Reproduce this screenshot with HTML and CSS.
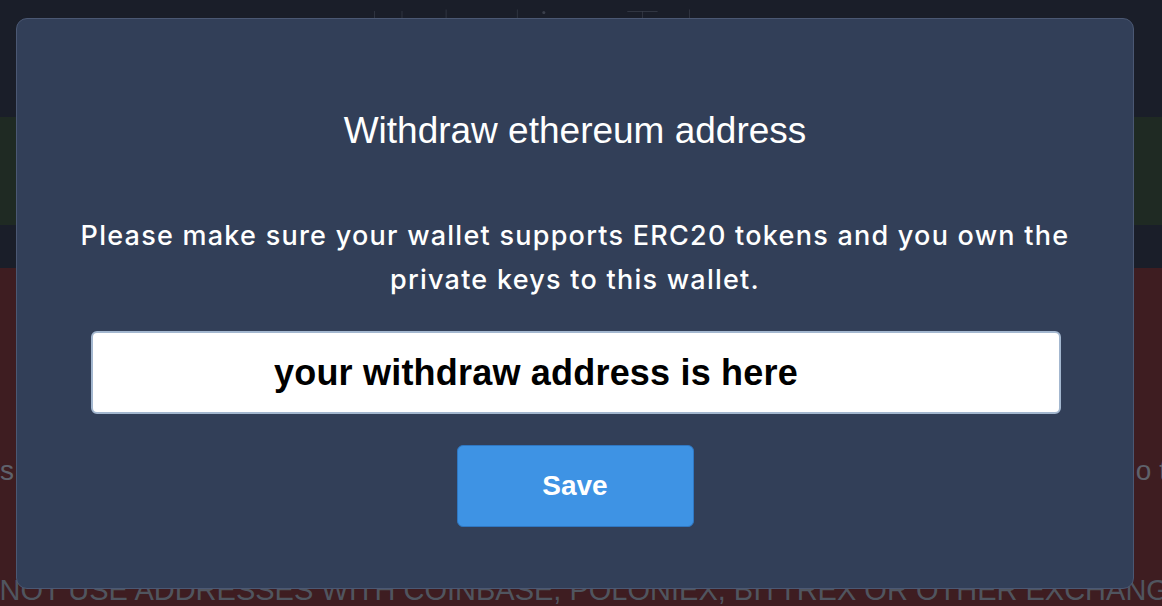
FILE: index.html
```html
<!DOCTYPE html>
<html lang="en">
<head>
<meta charset="utf-8">
<title>Withdraw ethereum address</title>
<link rel="stylesheet" href="styles.css">
</head>
<body>
<div class="page">
  <header class="hero">
    <h1 class="hero-title">Unlocking Tokens</h1>
  </header>
  <section class="band band-green"></section>
  <section class="band band-dark"></section>
  <section class="band band-red">
    <div class="notice-line"><span>s</span><span>o t</span></div>
    <div class="warning">DO NOT USE ADDRESSES WITH COINBASE, POLONIEX, BITTREX OR OTHER EXCHANGES</div>
  </section>
</div>

<div class="overlay">
  <div class="modal">
    <h2 class="modal-title">Withdraw ethereum address</h2>
    <p class="modal-text">Please make sure your wallet supports ERC20 tokens and you own the private keys to this wallet.</p>
    <input class="address-input" type="text" value="your withdraw address is here">
    <button class="save-btn" type="button">Save</button>
  </div>
</div>
</body>
</html>
```

FILE: styles.css
```css
* { box-sizing: border-box; }
html, body { margin: 0; padding: 0; }
body {
  width: 1162px;
  height: 606px;
  overflow: hidden;
  background: #3e1d21;
  font-family: "Liberation Sans", Arial, sans-serif;
}
.page {
  display: flex;
  flex-direction: column;
  height: 606px;
}
.hero {
  height: 117px;
  background: #1a1e29;
  overflow: hidden;
}
.hero-title {
  margin: 0;
  text-align: center;
  font-family: Lato, "Liberation Sans", sans-serif;
  font-weight: 100;
  font-size: 56px;
  line-height: 58px;
  color: #3a3f4b;
  letter-spacing: 1px;
}
.band-green { height: 108px; background: #1f2a23; }
.band-dark { height: 43px; background: #1a1e29; }
.band-red {
  flex: 1;
  background: #3e1d21;
  display: flex;
  flex-direction: column;
  overflow: hidden;
}
.notice-line {
  display: flex;
  justify-content: space-between;
  margin: 187px -5px 0 0;
  font-size: 28px;
  line-height: 32px;
  color: #5e626c;
  white-space: pre;
}
.warning {
  margin-top: 86px;
  margin-left: -52px;
  white-space: nowrap;
  font-family: "Liberation Sans", Arial, sans-serif;
  font-size: 29px;
  line-height: 34px;
  color: #50555f;
}

.overlay {
  position: fixed;
  inset: 0;
  padding: 18px 28px 17px 16px;
}
.modal {
  height: 571px;
  background: #323f58;
  border: 1px solid #4b5873;
  border-radius: 11px;
  padding-top: 91px;
  display: flex;
  flex-direction: column;
  align-items: center;
  color: #ffffff;
}
.modal-title {
  margin: 0;
  font-family: "Liberation Sans", Arial, sans-serif;
  font-weight: 400;
  font-size: 37px;
  line-height: 42px;
}
.modal-text {
  margin: 62px 0 0;
  width: 1040px;
  text-align: center;
  font-family: Inter, "Noto Sans", sans-serif;
  font-weight: 500;
  font-size: 27px;
  letter-spacing: 1.25px;
  line-height: 44px;
}
.address-input {
  display: block;
  margin-top: 29px;
  width: 970px;
  height: 83px;
  margin-left: 2px;
  padding: 0 0 0 181px;
  border: 2px solid #a3b7cf;
  border-radius: 6px;
  background: #ffffff;
  font-family: "Liberation Sans", Arial, sans-serif;
  font-weight: 700;
  font-size: 36px;
  letter-spacing: 0.2px;
  color: #000000;
  outline: none;
}
.save-btn {
  margin-top: 31px;
  width: 237px;
  height: 82px;
  background: #3e93e4;
  border: 1px solid #2f77c2;
  border-radius: 6px;
  color: #ffffff;
  font-family: "Liberation Sans", Arial, sans-serif;
  font-weight: 700;
  font-size: 28px;
  cursor: pointer;
}
```
